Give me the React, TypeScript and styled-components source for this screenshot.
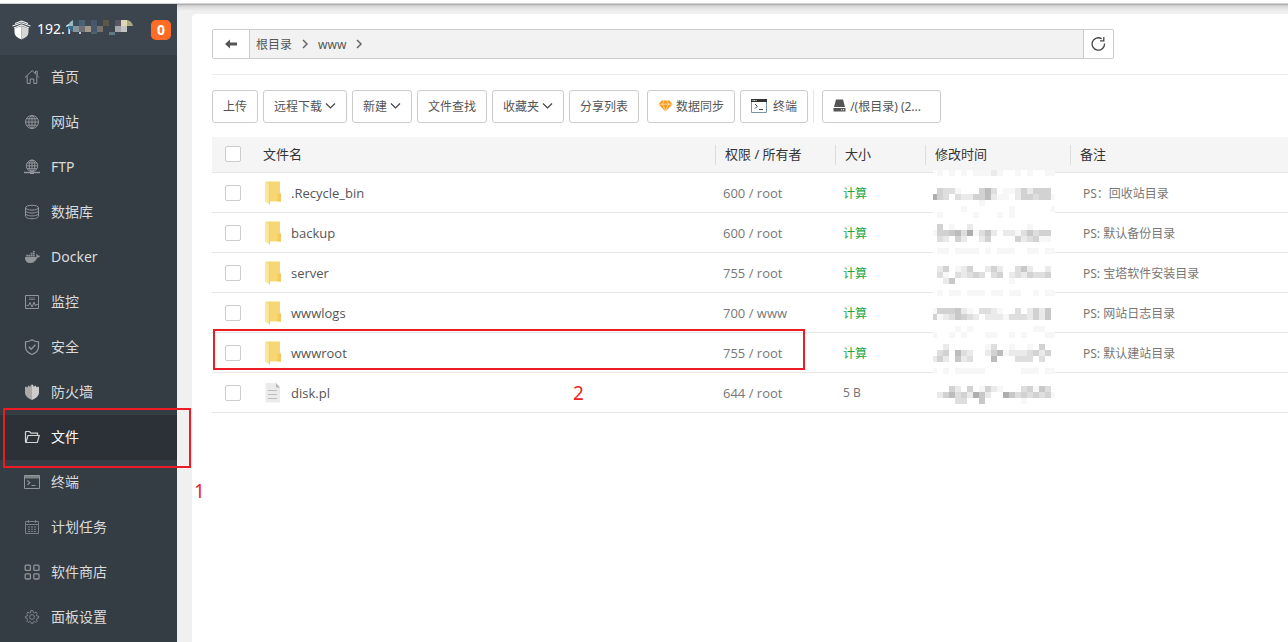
import React from "react";
import styled, { createGlobalStyle } from "styled-components";

const GlobalStyle = createGlobalStyle`
  *, *::before, *::after { box-sizing: border-box; }
  body {
    margin: 0;
    background: #f0f0f0;
    color: #555;
    font-family: "Noto Sans", "Noto Sans CJK SC", sans-serif;
    font-size: 12px;
    overflow-x: hidden;
  }
  button, input { font: inherit; color: inherit; margin: 0; }
  a { color: inherit; text-decoration: none; }
`;

const Page = styled.div`
  min-height: 100vh;
  display: flex;
  flex-direction: column;
  overflow: hidden;
`;

const WindowEdge = styled.div`
  height: 4px;
  flex: none;
  background: #fff;
  border-bottom: 1px solid #d2d2d2;
`;

const Body = styled.div`
  flex: 1;
  display: flex;
`;

/* ---------- sidebar ---------- */

const Sidebar = styled.aside`
  width: 177px;
  flex: none;
  background: #353d44;
`;

const Server = styled.header`
  height: 51px;
  padding: 0 6px 0 12px;
  display: flex;
  align-items: center;
  background: #3c444d;
  color: #fff;
`;

const Address = styled.div`
  position: relative;
  flex: 1;
  margin-left: 6px;
  padding-bottom: 2px;
  font-size: 14px;
  line-height: 20px;
`;

const AddressMosaic = styled.svg`
  position: absolute;
  left: 31px;
  top: 1px;
`;

const Badge = styled.span`
  width: 20px;
  height: 20px;
  border-radius: 5px;
  background: #ff6c26;
  font-size: 14px;
  font-weight: 700;
  line-height: 20px;
  text-align: center;
`;

const NavList = styled.ul`
  list-style: none;
  margin: 0;
  padding: 0;
`;

const NavItem = styled.li`
  position: relative;
`;

const NavLink = styled.a<{ $active?: boolean }>`
  height: 45px;
  padding: 0 0 2px 24px;
  display: flex;
  align-items: center;
  gap: 11px;
  font-size: 14px;
  line-height: 20px;
  color: ${(p) => (p.$active ? "#fff" : "#d9dbdd")};
  background: ${(p) => (p.$active ? "#2c3138" : "transparent")};
  svg { color: ${(p) => (p.$active ? "#d4d4d4" : "#92969a")}; }
`;

/* ---------- main panel ---------- */

const Main = styled.main`
  flex: 1;
  min-width: 0;
  display: flex;
  padding: 10px 0 0 15px;
  background: linear-gradient(#9c9c9c 0, #c6c6c6 1px, #dedede 3px, #f0f0f0 7px);
`;

const Panel = styled.section`
  flex: 1;
  min-width: 0;
  padding: 15px 0 0 20px;
  background: #fff;
  border-top-left-radius: 4px;
`;

const PathBar = styled.div`
  height: 30px;
  margin-right: 174px;
  display: flex;
  border: 1px solid #ccc;
  border-radius: 2px;
  background: #f2f2f2;
`;

const PathButton = styled.button<{ $width: number; $side: "left" | "right" }>`
  width: ${(p) => p.$width}px;
  padding: 0;
  display: flex;
  align-items: center;
  justify-content: center;
  border: 0;
  border-${(p) => (p.$side === "left" ? "right" : "left")}: 1px solid #ccc;
  background: #fff;
`;

const Crumbs = styled.nav`
  flex: 1;
  display: flex;
  align-items: center;
  gap: 8px;
  padding-left: 6px;
`;

const Toolbar = styled.div`
  margin-top: 15px;
  padding: 15px 0 14px;
  display: flex;
  gap: 5px;
  border-top: 1px solid #eaeaea;
`;

const ToolButton = styled.button<{ $gap?: number; $spaced?: boolean; $wide?: boolean }>`
  height: 33px;
  padding: 0 10px 2px;
  min-width: ${(p) => (p.$wide ? "119px" : "0")};
  margin-left: ${(p) => (p.$spaced ? "3px" : "0")};
  display: flex;
  align-items: center;
  gap: ${(p) => p.$gap ?? 3}px;
  border: 1px solid #ccc;
  border-radius: 3px;
  background: #fff;
  color: #555;
  white-space: nowrap;
`;

const Divider = styled.span`
  width: 1px;
  background: #e6e6e6;
`;

/* ---------- file table ---------- */

const TableArea = styled.div`
  position: relative;
`;

const FileTable = styled.table`
  width: 100%;
  table-layout: fixed;
  border-collapse: separate;
  border-spacing: 0;
`;

const HeadCell = styled.th<{ $line?: boolean }>`
  height: 36px;
  padding: 0 0 2px ${(p) => (p.$line ? "10px" : "9px")};
  border-bottom: 1px solid #e6e6e6;
  background: ${(p) =>
    p.$line
      ? "linear-gradient(#ddd, #ddd) 0 8px / 1px 20px no-repeat #f5f5f5"
      : "#f5f5f5"};
  color: #333;
  font-size: 13px;
  font-weight: 400;
  text-align: left;
`;

const Cell = styled.td<{ $pad?: number }>`
  height: 40px;
  padding: 0 0 0 ${(p) => p.$pad ?? 8}px;
  border-bottom: 1px solid #e6e6e6;
  color: #777;
  font-size: 12px;
`;

const OwnerCell = styled(Cell)`
  font-family: "Open Sans", "Noto Sans", sans-serif;
  font-size: 13px;
`;

const CheckCell = styled.td`
  height: 40px;
  padding: 0 0 0 13px;
  border-bottom: 1px solid #e6e6e6;
`;

const CheckHead = styled(HeadCell)`
  padding-left: 13px;
`;

const Check = styled.input`
  appearance: none;
  display: block;
  width: 16px;
  height: 16px;
  border: 1px solid #ccc;
  border-radius: 2px;
  background: #fff;
`;

const FileLink = styled.a`
  display: flex;
  align-items: center;
  gap: 8px;
  color: #555;
  font-family: "Open Sans", "Noto Sans", sans-serif;
  font-size: 13px;
`;

const SizeLink = styled.a`
  color: #20a53a;
`;

const TimeMosaic = styled.svg`
  position: absolute;
  top: 33px;
  right: 233px;
`;

/* ---------- red step marks ---------- */

const NavMark = styled.span`
  position: absolute;
  inset: -7px -14px -8px 3px;
  border: 2px solid #ed1c24;
  z-index: 1;
`;

const RowMark = styled.span`
  position: absolute;
  left: 1px;
  right: 483px;
  top: 192px;
  height: 41px;
  border: 2px solid #ed1c24;
`;

const StepNumber = styled.span<{ $left: number; $top: number }>`
  position: absolute;
  left: ${(p) => p.$left}px;
  top: ${(p) => p.$top}px;
  color: #f0241c;
  font-size: 19px;
  line-height: 24px;
`;

/* ---------- icons ---------- */

const Icon = ({ children, size = 16 }: { children: React.ReactNode; size?: number }) => (
  <svg width={size} height={size} viewBox="0 0 16 16" fill="none" stroke="currentColor" strokeWidth="1" aria-hidden="true">
    {children}
  </svg>
);

const HomeIcon = () => (
  <Icon>
    <path d="M1 8.5 8.3 1.5 15 8.5M11.5 4.5V2.2h1.7v4.2M3.2 7v7.5h3V10h3.6v4.5h3V7" />
  </Icon>
);
const GlobeIcon = () => (
  <Icon>
    <circle cx="8" cy="8" r="6.5" />
    <ellipse cx="8" cy="8" rx="3.2" ry="6.5" />
    <path d="M8 1.5v13M1.5 8h13M2.5 4.8h11M2.5 11.2h11" />
  </Icon>
);
const FtpIcon = () => (
  <Icon>
    <circle cx="8" cy="6.8" r="5.7" />
    <ellipse cx="8" cy="6.8" rx="2.8" ry="5.7" />
    <path d="M8 1v12M2.4 6.8h11.2M3 4h10M3 9.7h10" />
    <path d="M0 13.5h16M6 14.2h4" strokeWidth="1.4" />
  </Icon>
);
const DatabaseIcon = () => (
  <Icon>
    <ellipse cx="8" cy="3.7" rx="6.5" ry="2.4" />
    <path d="M1.5 3.7v8.6c0 1.3 2.9 2.4 6.5 2.4s6.5-1.1 6.5-2.4V3.7M1.5 6.6C1.5 7.9 4.4 9 8 9s6.5-1.1 6.5-2.4M1.5 9.5c0 1.3 2.9 2.4 6.5 2.4s6.5-1.1 6.5-2.4" />
  </Icon>
);
const DockerIcon = () => (
  <Icon>
    <path
      fill="currentColor"
      stroke="none"
      d="M1 8h11.2c.4-.8.3-1.6-.1-2.3l.8-.8c.7.5 1 1.1 1.1 1.8.7-.2 1.4-.1 2 .3-.4 1-1.3 1.5-2.7 1.5C12.200 12 9.700 14 6.300 14 2.900 14 1 12 1 8ZM2.300 5.700h1.800v1.700H2.300zM4.500 5.700h1.800v1.700H4.500zM6.700 5.700h1.800v1.700H6.700zM8.900 5.700h1.800v1.700H8.900zM6.700 3.700h1.800v1.500H6.700zM8.900 3.700h1.800v1.500H8.900zM8.900 2h1.800v1.200H8.900z"
    />
  </Icon>
);
const MonitorIcon = () => (
  <Icon>
    <path d="M1.500 1.500h13v13h-13z" />
    <path d="M2.500 11.500h2L6 8.500l2 4.500 2-5 1.500 4 .8-1.500h1.500" />
    <path d="M5 4h6M5 5.500h6" opacity=".6" />
  </Icon>
);
const ShieldIcon = () => (
  <Icon>
    <path d="M8 .8C6 2.300 4 2.800 1.500 2.800v5c0 3.600 2.600 6.200 6.500 7.700 3.900-1.500 6.500-4.100 6.500-7.700v-5C12 2.800 10 2.300 8 .8Z" strokeWidth="1.200" />
    <path d="m4.800 7.700 2.400 2.500 4.200-4.400" strokeWidth="1.300" />
  </Icon>
);
const FirewallIcon = () => (
  <Icon>
    <path fill="#aaa" stroke="none" d="M8 .3 6.600 1.500v1H5.300v-1L3.800 2v1.300H2.500v-.8L1 3v5.500c0 3.200 2.700 5.900 7 7.500Z" />
    <path fill="#cdcdcd" stroke="none" d="M8 .3 9.400 1.500v1h1.300v-1l1.500.5v1.300h1.300v-.8L15 3v5.500c0 3.200-2.700 5.900-7 7.500Z" />
  </Icon>
);
const FolderIcon = () => (
  <Icon>
    <path d="M2 13.500 1.500 13V3l.5-.5h3.500L7 4.200h6.500V6M2 13.500 4 6.500h11.300l-2 7Z" strokeWidth="1.200" />
  </Icon>
);
const TerminalIcon = () => (
  <Icon>
    <path d="M.5 1.500h15v13H.5z" />
    <path d="M.5 3h15" strokeWidth="3" opacity=".8" />
    <path d="m3.500 6.500 2.300 2.200-2.300 2.200M7.500 11.500h4" strokeWidth="1.200" />
  </Icon>
);
const CalendarIcon = () => (
  <Icon>
    <g opacity=".75">
      <path d="M1.500 2.500h13v12h-13zM1.500 5.500h13M4.500 1v3M11.500 1v3" />
      <path d="M4 8h8M4 10.300h8M4 12.500h8" strokeDasharray="2 1" />
    </g>
  </Icon>
);
const AppsIcon = () => (
  <Icon>
    <g strokeWidth="1.300">
      <rect x="1.200" y="1.200" width="5.200" height="5.200" rx="1" />
      <rect x="9.800" y="1.200" width="5.200" height="5.200" rx="1" />
      <rect x="1.200" y="9.800" width="5.200" height="5.200" rx="1" />
      <rect x="9.800" y="9.800" width="5.200" height="5.200" rx="1" />
    </g>
  </Icon>
);
const GearIcon = () => (
  <Icon>
    <g opacity=".8">
      <path d="m6.700 1.500.3 1.700-1.500.7L4 3 2.800 4.200l.9 1.400-.6 1.500-1.700.3v1.600l1.700.3.6 1.500-.9 1.400L4 13.400l1.500-.9 1.500.6.3 1.600h1.500l.3-1.600 1.500-.6 1.500.9 1.200-1.200-.9-1.400.6-1.500 1.700-.3V7.400L13 7.100l-.6-1.500.9-1.400L12.100 3l-1.500.9-1.500-.7-.3-1.700Z" />
      <circle cx="8" cy="8" r="2.400" />
    </g>
  </Icon>
);

const BrandLogo = () => (
  <svg width="19" height="20" viewBox="0 0 19 20" fill="none" aria-hidden="true">
    <path d="M9.500 1 3 3.500M9.500 1 16 3.500M.5 6 9.500 2.800 18.500 6M2 8l7.500-3L17 8" stroke="#f3f3f3" strokeWidth="1.200" />
    <path d="M2.500 8.500 9.500 6v13.500C5 17.800 2.500 15.500 2.500 12Z" fill="#fff" />
    <path d="M16.500 8.500 9.500 6v13.500c4.500-1.700 7-4 7-7.500Z" fill="#d6d6d6" />
  </svg>
);

const BackIcon = () => (
  <svg width="12" height="10" viewBox="0 0 12 10" aria-hidden="true">
    <path d="M0 5 5 .5v3h7v3H5v3Z" fill="#555" />
  </svg>
);
const CrumbArrow = () => (
  <svg width="10" height="10" viewBox="0 0 10 10" fill="none" aria-hidden="true">
    <path d="m3 1 4 4-4 4" stroke="#666" strokeWidth="1.500" />
  </svg>
);
const RefreshIcon = () => (
  <svg width="16" height="16" viewBox="0 0 16 16" fill="none" stroke="#444" strokeWidth="1.300" aria-hidden="true">
    <path d="M13.500 7.500A6.200 6.200 0 1 1 10.700 2.800" />
    <path d="M12.800 1v3.800H9" />
  </svg>
);
const DownIcon = () => (
  <svg width="11" height="8" viewBox="0 0 11 8" fill="none" aria-hidden="true">
    <path d="m1 1.500 4.500 4.500L10 1.500" stroke="#444" strokeWidth="1.200" />
  </svg>
);
const DiamondIcon = () => (
  <svg width="15" height="12" viewBox="0 0 15 12" fill="none" aria-hidden="true">
    <path d="M3.500.5h8l3 3.700L7.500 11.500.5 4.200Z" fill="#fc9a1d" />
    <path d="M.5 4.200h14M4.500 4.200l3 7 3-7M4.500 4.200 5.800.5M10.500 4.200 9.200.5" stroke="#ffe2b5" strokeWidth=".8" />
  </svg>
);
const ConsoleIcon = () => (
  <svg width="16" height="14" viewBox="0 0 16 14" fill="none" aria-hidden="true">
    <path d="M.5.5h15v13H.5z" stroke="#7794a8" />
    <path d="M0 0h16v3H0z" fill="#333" />
    <path d="M1.500 1.500h4" stroke="#fff" strokeDasharray="1 .7" />
    <path d="m4 5 2.300 2.300L4 9.600M8 10.500h4" stroke="#444" />
  </svg>
);
const DiskIcon = () => (
  <svg width="13" height="13" viewBox="0 0 13 13" aria-hidden="true">
    <path d="M3 .5h7l2 7.500H1ZM.5 9h12v3.500H.5z" fill="#555" />
    <path d="M8 10.300h1.200v1H8zM10 10.300h1.200v1H10z" fill="#fff" />
  </svg>
);
const FolderFileIcon = () => (
  <svg width="18" height="24" viewBox="0 0 18 24" aria-hidden="true">
    <path d="M1 .5h14v12h1v8H5Z" fill="#f7d774" />
    <path d="M12.500 12.500H16v8h-3.500z" fill="#f3cb5c" />
    <path d="m0 .5 5 3.500v20L0 20.500Z" fill="#fde699" />
    <path d="M4.500 4v19" stroke="#f0cf6f" />
  </svg>
);
const PlainFileIcon = () => (
  <svg width="18" height="24" viewBox="0 0 18 24" aria-hidden="true">
    <path d="M.5 2H11l4 4v15.500H.5z" fill="#ebebeb" />
    <path d="m11 2 4 4.500h-4z" fill="#b8b8b8" />
    <path d="M3 9.500h9M3 13.500h9M3 17.500h9" stroke="#bdbdbd" />
  </svg>
);

/* ---------- mosaics ---------- */

const greys = ["", "#f7f7f7", "#eaeaea", "#dedede", "#d2d2d2", "#c8c8c8", "#bcbcbc", "#aeaeae"];

/* Row number -> grey level of each of the 21 columns. */
const timeCells: Record<number, string> = {
  0: ".1.1.1.11121..1.1..11",
  3: ".4331...463.11242444.",
  4: "743.322446211.2443441",
  5: "........1............",
  6: ".....1.......1......1",
  7: ".1.....1...1.1.......",
  9: ".4.1..2.........1....",
  10: "14456371352.22135344.",
  11: ".32.42..24....423411.",
  13: ".11.1111.1.111..11.11",
  16: ".24.124..242..352..2.",
  17: ".31.32343.34.2324334.",
  18: "..25.........1.......",
  20: ".1.11.111.11.11..1.11",
  23: "1444521.3321..3.2425.",
  24: "41235432.22213332425.",
  26: "....1.1..........11..",
  27: "1..1.1...11..1.1...11",
  29: "..2......13..1..1.4..",
  30: ".34.632..24612223424.",
  31: "242.523...6...333.3..",
  33: "1.1.11111......111.11",
  36: "...42.4.1421...34153.",
  37: ".246342752..753434341",
  38: "....33..5......1.....",
};

const HiddenTimes = () => (
  <TimeMosaic width="122" height="234" viewBox="0 0 122 234" shapeRendering="crispEdges" aria-hidden="true">
    <rect width="122" height="234" fill="#fff" />
    {Object.entries(timeCells).flatMap(([row, levels]) =>
      [...levels].map((level, i) =>
        level === "." ? null : (
          <rect
            key={`${row}-${i}`}
            x={i === 0 ? 0 : i * 6 - 2}
            y={Number(row) * 6}
            width={i === 0 || i === 20 ? 4 : 6}
            height="6"
            fill={greys[Number(level)]}
          />
        )
      )
    )}
  </TimeMosaic>
);

const addressCells: [number, number, string][] = [
  [5, 0, "#3a4d5c"], [11, 0, "#4a6272"], [17, 0, "#3f4953"], [23, 0, "#46566b"],
  [35, 0, "#5c5849"], [47, 0, "#5a5560"], [53, 0, "#dcd8b4"],
  [5, 6, "#87949a"], [11, 6, "#6e7077"], [17, 6, "#a89a8b"], [23, 6, "#46566b"],
  [29, 6, "#77726b"], [47, 6, "#a5a5ab"], [53, 6, "#c4c4c4"],
];

const HiddenAddress = () => (
  <AddressMosaic width="66" height="16" viewBox="0 0 66 16" aria-hidden="true">
    <path d="M5 0v6H0Q1 2 5 0Z" fill="#9dbabd" />
    <path d="M0 6h5v6Q1 10 0 6Z" fill="#3a6a85" />
    {addressCells.map(([x, y, fill]) => (
      <rect key={`${x}-${y}`} x={x} y={y} width="6" height="6" fill={fill} />
    ))}
    <path d="M59 0q5 1 6 6h-6Z" fill="#aaa98a" />
    <path d="M23 12h6v2h-6z" fill="#4f6169" />
    <path d="M41 12h6v3h-6z" fill="#5f7883" />
    <path d="M11 12h2v2h-2z" fill="#c5c8ca" />
  </AddressMosaic>
);

/* ---------- data ---------- */

const navItems = [
  { label: "首页", icon: <HomeIcon /> },
  { label: "网站", icon: <GlobeIcon /> },
  { label: "FTP", icon: <FtpIcon /> },
  { label: "数据库", icon: <DatabaseIcon /> },
  { label: "Docker", icon: <DockerIcon /> },
  { label: "监控", icon: <MonitorIcon /> },
  { label: "安全", icon: <ShieldIcon /> },
  { label: "防火墙", icon: <FirewallIcon /> },
  { label: "文件", icon: <FolderIcon />, active: true },
  { label: "终端", icon: <TerminalIcon /> },
  { label: "计划任务", icon: <CalendarIcon /> },
  { label: "软件商店", icon: <AppsIcon /> },
  { label: "面板设置", icon: <GearIcon /> },
];

const files = [
  { name: ".Recycle_bin", owner: "600 / root", note: "PS：回收站目录" },
  { name: "backup", owner: "600 / root", note: "PS: 默认备份目录" },
  { name: "server", owner: "755 / root", note: "PS: 宝塔软件安装目录" },
  { name: "wwwlogs", owner: "700 / www", note: "PS: 网站日志目录" },
  { name: "wwwroot", owner: "755 / root", note: "PS: 默认建站目录" },
  { name: "disk.pl", owner: "644 / root", note: "", size: "5 B" },
];

export default function App() {
  return (
    <Page>
      <GlobalStyle />
      <WindowEdge />
      <Body>
        <Sidebar>
          <Server>
            <BrandLogo />
            <Address>
              192.1
              <HiddenAddress />
            </Address>
            <Badge>0</Badge>
          </Server>
          <NavList>
            {navItems.map((item) => (
              <NavItem key={item.label}>
                <NavLink href="#" $active={item.active}>
                  {item.icon}
                  {item.label}
                </NavLink>
                {item.active && (
                  <>
                    <NavMark />
                    <StepNumber $left={194} $top={64}>1</StepNumber>
                  </>
                )}
              </NavItem>
            ))}
          </NavList>
        </Sidebar>
        <Main>
          <Panel>
            <PathBar>
              <PathButton $width={37} $side="left" aria-label="返回">
                <BackIcon />
              </PathButton>
              <Crumbs>
                <a href="#">根目录</a>
                <CrumbArrow />
                <a href="#">www</a>
                <CrumbArrow />
              </Crumbs>
              <PathButton $width={30} $side="right" aria-label="刷新">
                <RefreshIcon />
              </PathButton>
            </PathBar>
            <Toolbar>
              <ToolButton>上传</ToolButton>
              <ToolButton>远程下载<DownIcon /></ToolButton>
              <ToolButton>新建<DownIcon /></ToolButton>
              <ToolButton>文件查找</ToolButton>
              <ToolButton>收藏夹<DownIcon /></ToolButton>
              <ToolButton>分享列表</ToolButton>
              <ToolButton $spaced><DiamondIcon />数据同步</ToolButton>
              <ToolButton $gap={6}><ConsoleIcon />终端</ToolButton>
              <Divider />
              <ToolButton $gap={4} $spaced $wide><DiskIcon />/(根目录) (2...</ToolButton>
            </Toolbar>
            <TableArea>
              <FileTable>
                <colgroup>
                  <col style={{ width: 42 }} />
                  <col />
                  <col style={{ width: 120 }} />
                  <col style={{ width: 90 }} />
                  <col style={{ width: 145 }} />
                  <col style={{ width: 218 }} />
                </colgroup>
                <thead>
                  <tr>
                    <CheckHead><Check type="checkbox" aria-label="全选" /></CheckHead>
                    <HeadCell>文件名</HeadCell>
                    <HeadCell $line>权限 / 所有者</HeadCell>
                    <HeadCell $line>大小</HeadCell>
                    <HeadCell $line>修改时间</HeadCell>
                    <HeadCell $line>备注</HeadCell>
                  </tr>
                </thead>
                <tbody>
                  {files.map((file) => (
                    <tr key={file.name}>
                      <CheckCell><Check type="checkbox" aria-label={file.name} /></CheckCell>
                      <Cell $pad={11}>
                        <FileLink href="#">
                          {file.size ? <PlainFileIcon /> : <FolderFileIcon />}
                          {file.name}
                        </FileLink>
                      </Cell>
                      <OwnerCell>{file.owner}</OwnerCell>
                      <Cell>{file.size ?? <SizeLink href="#">计算</SizeLink>}</Cell>
                      <Cell />
                      <Cell $pad={13}>{file.note}</Cell>
                    </tr>
                  ))}
                </tbody>
              </FileTable>
              <HiddenTimes />
              <RowMark />
              <StepNumber $left={361} $top={244}>2</StepNumber>
            </TableArea>
          </Panel>
        </Main>
      </Body>
    </Page>
  );
}
